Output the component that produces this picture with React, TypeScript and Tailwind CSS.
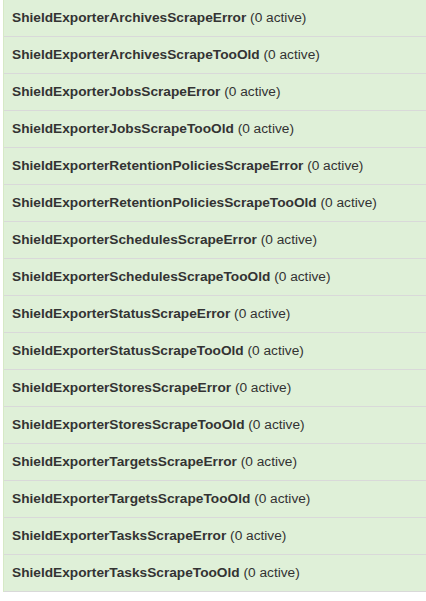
const alerts = [
  'ShieldExporterArchivesScrapeError',
  'ShieldExporterArchivesScrapeTooOld',
  'ShieldExporterJobsScrapeError',
  'ShieldExporterJobsScrapeTooOld',
  'ShieldExporterRetentionPoliciesScrapeError',
  'ShieldExporterRetentionPoliciesScrapeTooOld',
  'ShieldExporterSchedulesScrapeError',
  'ShieldExporterSchedulesScrapeTooOld',
  'ShieldExporterStatusScrapeError',
  'ShieldExporterStatusScrapeTooOld',
  'ShieldExporterStoresScrapeError',
  'ShieldExporterStoresScrapeTooOld',
  'ShieldExporterTargetsScrapeError',
  'ShieldExporterTargetsScrapeTooOld',
  'ShieldExporterTasksScrapeError',
  'ShieldExporterTasksScrapeTooOld',
];

export default function App() {
  return (
    <div className="w-[426px] h-[601px] overflow-hidden bg-white font-['Liberation_Sans',Arial,sans-serif] text-[13.7px] text-[#333]">
      <div className="ml-[3px] border-l border-[#d6e9c6]">
        {alerts.map((name) => (
          <div key={name} className="h-[37px] bg-[#dff0d8] border-b border-[#d9d9d9] pl-[8px] pt-px flex items-center">
            <span>
              <b className="font-bold">{name}</b> (0 active)
            </span>
          </div>
        ))}
      </div>
    </div>
  );
}
